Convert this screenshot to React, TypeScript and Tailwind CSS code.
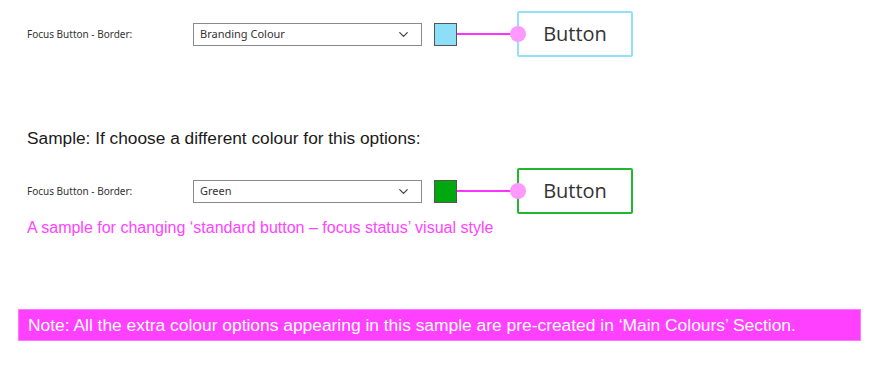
import { ChevronDown } from 'lucide-react';

interface RowProps {
  value: string;
  swatch: string;
  border: string;
}

function FocusRow({ value, swatch, border }: RowProps) {
  return (
    <div className="flex items-center h-[46px]">
      <span className="w-[166px] text-[10px] text-[#333] font-['Noto_Sans',sans-serif]">Focus Button - Border:</span>
      <div className="w-[229px] h-[23px] border border-[#8a8a8a] bg-white flex items-center justify-between pl-[6px] pr-[10px]">
        <span className="text-[11px] text-[#333] font-['Noto_Sans',sans-serif]">{value}</span>
        <ChevronDown size={15} strokeWidth={2} className="text-[#444]" />
      </div>
      <div className={`ml-[12px] w-[23px] h-[23px] border border-[#555] ${swatch}`} />
      <div className="w-[60px] h-[2px] bg-[#ff33ff]" />
      <div className={`relative w-[116px] h-[46px] border-2 rounded-[2px] flex items-center justify-center ${border}`}>
        <span className="absolute -left-[9px] top-1/2 -translate-y-1/2 w-[16px] h-[16px] rounded-full bg-[#ff99ff]" />
        <span className="text-[20px] text-[#333] font-['Open_Sans',sans-serif]">Button</span>
      </div>
    </div>
  );
}

export default function App() {
  return (
    <div className="w-[891px] h-[368px] bg-white relative font-['Liberation_Sans',Arial,sans-serif]">
      <div className="pl-[27px] pt-[11px]">
        <FocusRow value="Branding Colour" swatch="bg-[#8ddff7]" border="border-[#93e0f8]" />
        <p className="mt-[70px] text-[17.3px] text-[#1a1a1a] leading-[22px]">Sample: If choose a different colour for this options:</p>
        <div className="mt-[19px]">
          <FocusRow value="Green" swatch="bg-[#00a80f]" border="border-[#22b72e]" />
        </div>
        <p className="mt-[3px] text-[16px] text-[#ff44ff] leading-[22px]">A sample for changing ‘standard button – focus status’ visual style</p>
      </div>
      <div className="absolute left-[18px] top-[309px] w-[843px] h-[32px] bg-[#ff40ff] border border-[#ff77ff] flex items-center pl-[9px]">
        <span className="text-white text-[17.4px]">Note: All the extra colour options appearing in this sample are pre-created in ‘Main Colours’ Section.</span>
      </div>
    </div>
  );
}
